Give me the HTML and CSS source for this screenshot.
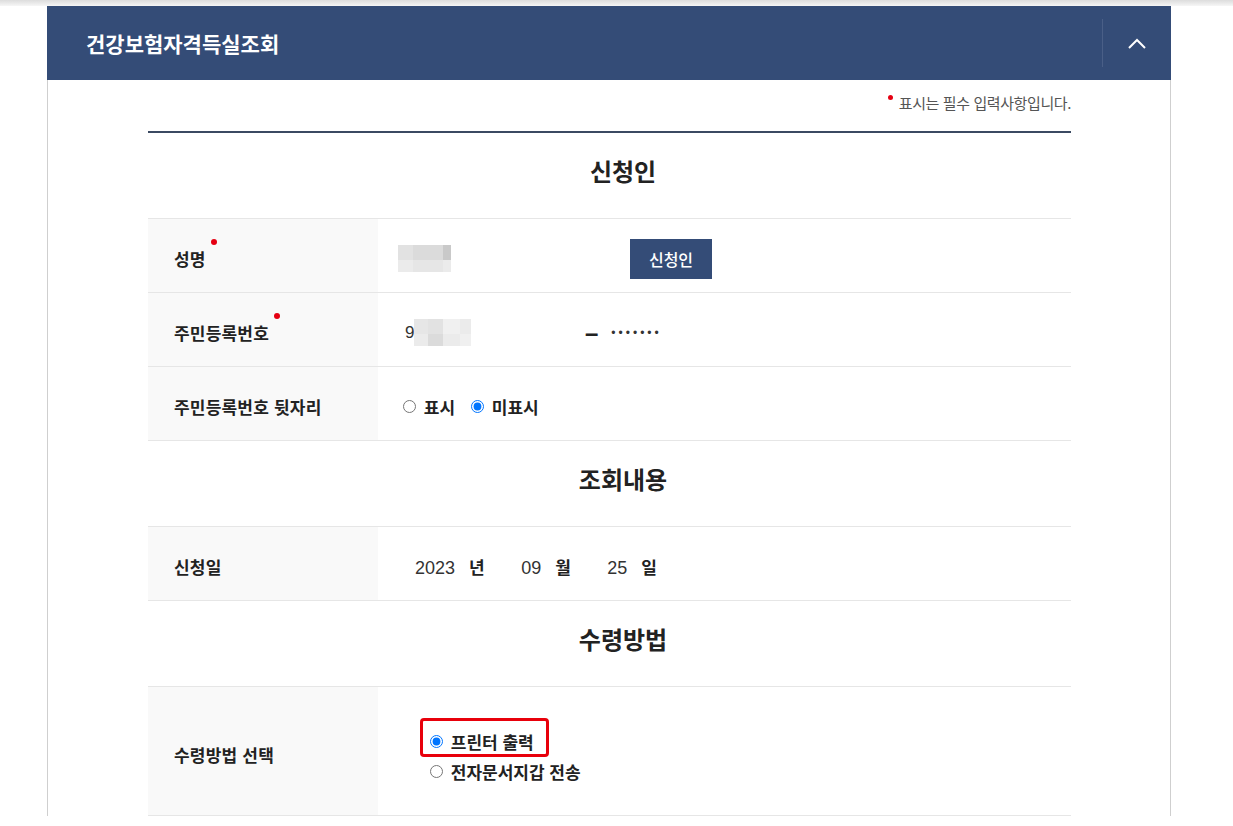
FILE: index.html
```html
<!DOCTYPE html>
<html lang="ko">
<head>
    <meta charset="UTF-8">
    <meta name="viewport" content="width=device-width, initial-scale=1.0">
    <title>건강보험자격득실조회</title>
    <link rel="stylesheet" href="styles.css">
</head>
<body>
    <div class="topshade"></div>
    <div class="wrap">
        <div class="box-head">
            <h1>건강보험자격득실조회</h1>
            <button class="fold" type="button" aria-label="접기">
                <svg width="18" height="11" viewBox="0 0 18 11"><polyline points="1,10 9,2 17,10" fill="none" stroke="#fff" stroke-width="2"/></svg>
            </button>
        </div>
        <div class="box-body">
            <p class="note"><span class="dot"></span>표시는 필수 입력사항입니다.</p>

            <h2 class="sec-title">신청인</h2>
            <div class="tbl">
                <div class="row">
                    <div class="th"><span class="req">성명</span></div>
                    <div class="td">
                        <span class="name-field">
                            <span class="mosaic m-name">
                                <i class="s3"></i><i class="s2"></i><i class="s2"></i><i class="s1"></i>
                                <i class="s5"></i><i class="s4"></i><i class="s4"></i><i class="s5"></i>
                            </span>
                        </span>
                        <button class="btn" type="button">신청인</button>
                    </div>
                </div>
                <div class="row">
                    <div class="th"><span class="req">주민등록번호</span></div>
                    <div class="td">
                        <span class="rrn-front">9<span class="mosaic m-rrn">
                                <i class="s4"></i><i class="s3"></i><i class="s6"></i><i class="s5"></i>
                                <i class="s5"></i><i class="s2"></i><i class="s5"></i><i class="s6"></i>
                            </span></span>
                        <span class="dash">–</span>
                        <span class="pw">•••••••</span>
                    </div>
                </div>
                <div class="row">
                    <div class="th">주민등록번호 뒷자리</div>
                    <div class="td">
                        <label class="opt"><input type="radio" name="show"> 표시</label>
                        <label class="opt"><input type="radio" name="show" checked> 미표시</label>
                    </div>
                </div>
            </div>

            <h2 class="sec-title">조회내용</h2>
            <div class="tbl">
                <div class="row">
                    <div class="th">신청일</div>
                    <div class="td">
                        <span class="date">
                            <span class="num">2023</span><span class="unit">년</span>
                            <span class="num">09</span><span class="unit">월</span>
                            <span class="num">25</span><span class="unit">일</span>
                        </span>
                    </div>
                </div>
            </div>

            <h2 class="sec-title">수령방법</h2>
            <div class="tbl">
                <div class="row row-tall">
                    <div class="th">수령방법 선택</div>
                    <div class="td">
                        <div class="opt-list">
                            <span class="highlight"></span>
                            <label class="opt"><input type="radio" name="recv" checked> 프린터 출력</label>
                            <label class="opt"><input type="radio" name="recv"> 전자문서지갑 전송</label>
                        </div>
                    </div>
                </div>
            </div>
        </div>
    </div>
</body>
</html>
```

FILE: styles.css
```css
body {
    margin: 0;
    font-family: "Liberation Sans", "Noto Sans CJK KR", sans-serif;
    color: #222;
    background: #fff;
}
.topshade {
    height: 6px;
    background: linear-gradient(#dcdcdc, #f6f6f6);
}
.wrap {
    margin-left: 47px;
    width: 1124px;
}
.box-head {
    display: flex;
    align-items: stretch;
    height: 74px;
    background: #344c77;
}
.box-head h1 {
    flex: 1;
    margin: 0;
    padding-left: 39px;
    font-family: "Noto Sans CJK KR", sans-serif;
    font-size: 21px;
    font-weight: 700;
    letter-spacing: 0;
    line-height: 74px;
    color: #fff;
}
.fold {
    width: 69px;
    margin: 13px 0;
    padding: 0;
    border: none;
    border-left: 1px solid #4a5f87;
    background: none;
    display: flex;
    align-items: center;
    justify-content: center;
    cursor: pointer;
}
.box-body {
    border-left: 1px solid #cfcfcf;
    border-right: 1px solid #cfcfcf;
    padding: 0 99px 0 100px;
}
.note {
    margin: 0;
    padding: 13px 0 18px;
    text-align: right;
    font-family: "Noto Sans CJK KR", sans-serif;
    font-size: 15px;
    line-height: 20px;
    letter-spacing: -0.4px;
    color: #555;
    border-bottom: 2px solid #3b4a62;
}
.dot {
    display: inline-block;
    width: 5px;
    height: 5px;
    border-radius: 50%;
    background: #e50012;
    margin-right: 6px;
    vertical-align: 9px;
}
.sec-title {
    margin: 0;
    padding: 21px 0 30px 27px;
    text-align: center;
    font-family: "Noto Sans CJK KR", sans-serif;
    font-size: 24px;
    font-weight: 700;
    line-height: 34px;
    color: #222;
}
.tbl {
    border-top: 1px solid #e6e6e6;
}
.row {
    display: flex;
    min-height: 73px;
    border-bottom: 1px solid #e6e6e6;
}
.row-tall {
    min-height: 128px;
}
.th {
    width: 230px;
    box-sizing: border-box;
    padding: 6px 0 0 26px;
    background: #f9f9f9;
    display: flex;
    align-items: center;
    font-family: "Noto Sans CJK KR", sans-serif;
    font-size: 17px;
    font-weight: 700;
    letter-spacing: 0.2px;
}
.td {
    flex: 1;
    padding: 6px 0 0 20px;
    display: flex;
    align-items: center;
}
.row-tall .td {
    padding-top: 11px;
}
.req {
    position: relative;
}
.req::after {
    content: "";
    position: absolute;
    right: -11px;
    top: -7px;
    width: 6px;
    height: 6px;
    border-radius: 50%;
    background: #e50012;
}
.name-field {
    width: 232px;
}
.mosaic {
    display: inline-grid;
    vertical-align: middle;
}
.mosaic i {
    display: block;
}
.m-name {
    grid-template-columns: 15px 15px 15px 8px;
    grid-template-rows: 15px 12px;
}
.m-rrn {
    grid-template-columns: 14px 15px 17px 11px;
    grid-template-rows: 15px 12px;
}
.s1 { background: #c9c9c9; }
.s2 { background: #dbdbdb; }
.s3 { background: #e2e2e2; }
.s4 { background: #e6e6e6; }
.s5 { background: #ebebeb; }
.s6 { background: #f0f0f0; }
.btn {
    width: 82px;
    height: 40px;
    border: none;
    background: #344c77;
    color: #fff;
    font-family: "Noto Sans CJK KR", sans-serif;
    font-size: 16px;
    font-weight: 500;
    cursor: pointer;
}
.rrn-front {
    width: 180px;
    padding-left: 7px;
    font-size: 17px;
    color: #333;
    display: flex;
    align-items: center;
}
.dash {
    font-size: 24px;
    font-weight: 700;
    margin-right: 13px;
    line-height: 1;
}
.pw {
    font-size: 12px;
    letter-spacing: 3px;
    color: #333;
}
.opt {
    display: inline-flex;
    align-items: center;
    font-family: "Noto Sans CJK KR", sans-serif;
    font-size: 17px;
    font-weight: 700;
    margin-right: 11px;
    white-space: pre;
}
.opt input {
    width: 13px;
    height: 13px;
    margin: 0 3px 0 5px;
}
.date {
    padding-left: 17px;
}
.num {
    font-size: 18px;
    color: #333;
    margin-right: 14px;
}
.unit {
    font-family: "Noto Sans CJK KR", sans-serif;
    font-size: 17px;
    font-weight: 700;
    margin-right: 32px;
}
.opt-list {
    position: relative;
    margin-left: 27px;
    display: flex;
    flex-direction: column;
}
.opt-list .opt {
    height: 30px;
}
.highlight {
    position: absolute;
    left: -5px;
    top: -9px;
    width: 123px;
    height: 33px;
    border: 3px solid #e8000b;
    border-radius: 4px;
}
```
